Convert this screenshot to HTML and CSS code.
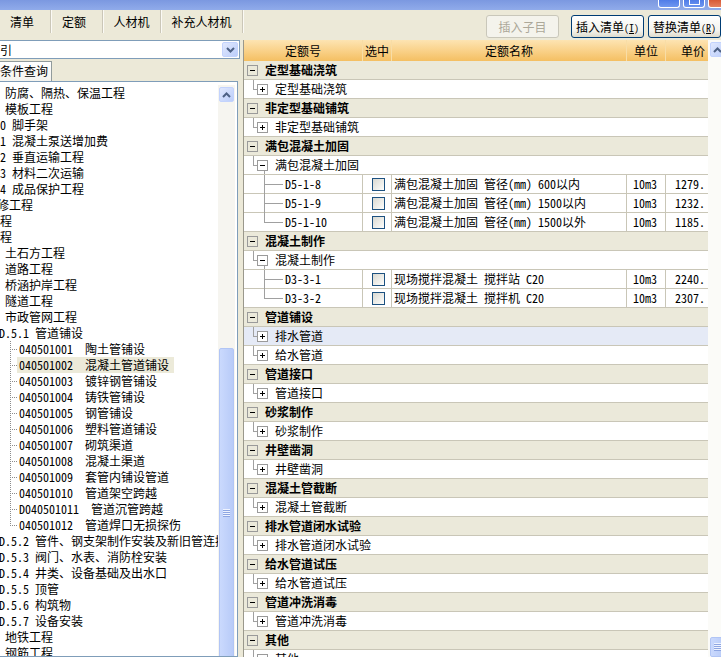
FILE: index.html
```html
<!DOCTYPE html>
<html lang="zh-CN">
<head>
<meta charset="utf-8">
<title>定额</title>
<link rel="stylesheet" href="styles.css">
</head>
<body>
<div class="titlebar">
  <div class="winbtns">
    <span class="wb"></span>
    <span class="wb"><i class="sq"></i></span>
    <span class="wb close"></span>
  </div>
</div>
<div class="toolbar">
  <nav class="tabs">
    <span class="tab t1">清单</span>
    <span class="tab t2">定额</span>
    <span class="tab t3">人材机</span>
    <span class="tab t4">补充人材机</span>
  </nav>
  <div class="actions">
    <button class="btn disabled">插入子目</button>
    <button class="btn b2">插入清单<small>(<u>I</u>)</small></button>
    <button class="btn b3">替换清单<small>(<u>R</u>)</small></button>
  </div>
</div>
<div class="main">
  <aside class="left">
    <div class="combo">
      <span class="combo-text">引</span>
      <span class="sbtn"><svg width="9" height="6" viewBox="0 0 9 6"><path d="M1 1L4.5 4.5L8 1" fill="none" stroke="#4d6185" stroke-width="2"/></svg></span>
    </div>
    <div class="qtabs"><span class="qtab">条件查询</span></div>
    <div class="listbox">
      <ul class="tree">
        <li class="i5">防腐、隔热、保温工程</li>
        <li class="i5">模板工程</li>
        <li>0 脚手架</li>
        <li>1 混凝土泵送增加费</li>
        <li>2 垂直运输工程</li>
        <li>3 材料二次运输</li>
        <li>4 成品保护工程</li>
        <li class="cut">修工程</li>
        <li>程</li>
        <li>程</li>
        <li class="i5">土石方工程</li>
        <li class="i5">道路工程</li>
        <li class="i5">桥涵护岸工程</li>
        <li class="i5">隧道工程</li>
        <li class="i5">市政管网工程</li>
        <li class="cut1">D.5.1 管道铺设</li>
        <li class="kids">
          <ul>
            <li>040501001  陶土管铺设</li>
            <li><span class="hl">040501002  混凝土管道铺设</span></li>
            <li>040501003  镀锌钢管铺设</li>
            <li>040501004  铸铁管铺设</li>
            <li>040501005  钢管铺设</li>
            <li>040501006  塑料管道铺设</li>
            <li>040501007  砌筑渠道</li>
            <li>040501008  混凝土渠道</li>
            <li>040501009  套管内铺设管道</li>
            <li>040501010  管道架空跨越</li>
            <li>D040501011  管道沉管跨越</li>
            <li class="last">040501012  管道焊口无损探伤</li>
          </ul>
        </li>
        <li class="cut1">D.5.2 管件、钢支架制作安装及新旧管连接</li>
        <li class="cut1">D.5.3 阀门、水表、消防栓安装</li>
        <li class="cut1">D.5.4 井类、设备基础及出水口</li>
        <li class="cut1">D.5.5 顶管</li>
        <li class="cut1">D.5.6 构筑物</li>
        <li class="cut1">D.5.7 设备安装</li>
        <li class="i5">地铁工程</li>
        <li class="i5">钢筋工程</li>
      </ul>
      <div class="vscroll lscroll">
        <span class="sbtn up"><svg width="9" height="6" viewBox="0 0 9 6"><path d="M1 5L4.5 1.5L8 5" fill="none" stroke="#4d6185" stroke-width="2"/></svg></span>
        <span class="thumb lthumb"><i class="grip"></i></span>
      </div>
    </div>
  </aside>
  <div class="splitter"></div>
  <section class="grid">
    <div class="gridbody">
      <div class="ghead">
        <span class="h c1">定额号</span>
        <span class="h c2">选中</span>
        <span class="h c3">定额名称</span>
        <span class="h c4">单位</span>
        <span class="h c5 r">单价</span>
      </div>

      <div class="row grp"><svg class="pm" width="11" height="11"><rect x="0.5" y="0.5" width="10" height="10" fill="none" stroke="#9a9a9a"/><path d="M3 5.5h5" stroke="#000"/></svg><b class="label">定型基础浇筑</b></div>
      <div class="row sub"><i class="conn"></i><svg class="pm" width="11" height="11"><rect x="0.5" y="0.5" width="10" height="10" fill="#fff" stroke="#9a9a9a"/><path d="M3 5.5h5M5.5 3v5" stroke="#000"/></svg><span class="label">定型基础浇筑</span></div>

      <div class="row grp"><svg class="pm" width="11" height="11"><rect x="0.5" y="0.5" width="10" height="10" fill="none" stroke="#9a9a9a"/><path d="M3 5.5h5" stroke="#000"/></svg><b class="label">非定型基础铺筑</b></div>
      <div class="row sub"><i class="conn"></i><svg class="pm" width="11" height="11"><rect x="0.5" y="0.5" width="10" height="10" fill="#fff" stroke="#9a9a9a"/><path d="M3 5.5h5M5.5 3v5" stroke="#000"/></svg><span class="label">非定型基础铺筑</span></div>

      <div class="row grp"><svg class="pm" width="11" height="11"><rect x="0.5" y="0.5" width="10" height="10" fill="none" stroke="#9a9a9a"/><path d="M3 5.5h5" stroke="#000"/></svg><b class="label">满包混凝土加固</b></div>
      <div class="row sub open"><i class="conn"></i><svg class="pm" width="11" height="11"><rect x="0.5" y="0.5" width="10" height="10" fill="#fff" stroke="#9a9a9a"/><path d="M3 5.5h5" stroke="#000"/></svg><span class="label">满包混凝土加固</span></div>
      <div class="row item"><div class="c c1"><i class="tl"></i><span>D5-1-8</span></div><div class="c c2"><i class="chk"></i></div><div class="c c3">满包混凝土加固 管径(mm) 600以内</div><div class="c c4">10m3</div><div class="c c5">1279.</div></div>
      <div class="row item"><div class="c c1"><i class="tl"></i><span>D5-1-9</span></div><div class="c c2"><i class="chk"></i></div><div class="c c3">满包混凝土加固 管径(mm) 1500以内</div><div class="c c4">10m3</div><div class="c c5">1232.</div></div>
      <div class="row item"><div class="c c1"><i class="tl last"></i><span>D5-1-10</span></div><div class="c c2"><i class="chk"></i></div><div class="c c3">满包混凝土加固 管径(mm) 1500以外</div><div class="c c4">10m3</div><div class="c c5">1185.</div></div>

      <div class="row grp"><svg class="pm" width="11" height="11"><rect x="0.5" y="0.5" width="10" height="10" fill="none" stroke="#9a9a9a"/><path d="M3 5.5h5" stroke="#000"/></svg><b class="label">混凝土制作</b></div>
      <div class="row sub open"><i class="conn"></i><svg class="pm" width="11" height="11"><rect x="0.5" y="0.5" width="10" height="10" fill="#fff" stroke="#9a9a9a"/><path d="M3 5.5h5" stroke="#000"/></svg><span class="label">混凝土制作</span></div>
      <div class="row item"><div class="c c1"><i class="tl"></i><span>D3-3-1</span></div><div class="c c2"><i class="chk"></i></div><div class="c c3">现场搅拌混凝土 搅拌站 C20</div><div class="c c4">10m3</div><div class="c c5">2240.</div></div>
      <div class="row item"><div class="c c1"><i class="tl last"></i><span>D3-3-2</span></div><div class="c c2"><i class="chk"></i></div><div class="c c3">现场搅拌混凝土 搅拌机 C20</div><div class="c c4">10m3</div><div class="c c5">2307.</div></div>

      <div class="row grp"><svg class="pm" width="11" height="11"><rect x="0.5" y="0.5" width="10" height="10" fill="none" stroke="#9a9a9a"/><path d="M3 5.5h5" stroke="#000"/></svg><b class="label">管道铺设</b></div>
      <div class="row sub sel"><i class="conn"></i><svg class="pm" width="11" height="11"><rect x="0.5" y="0.5" width="10" height="10" fill="#fff" stroke="#9a9a9a"/><path d="M3 5.5h5M5.5 3v5" stroke="#000"/></svg><span class="label">排水管道</span></div>
      <div class="row sub"><i class="conn"></i><svg class="pm" width="11" height="11"><rect x="0.5" y="0.5" width="10" height="10" fill="#fff" stroke="#9a9a9a"/><path d="M3 5.5h5M5.5 3v5" stroke="#000"/></svg><span class="label">给水管道</span></div>

      <div class="row grp"><svg class="pm" width="11" height="11"><rect x="0.5" y="0.5" width="10" height="10" fill="none" stroke="#9a9a9a"/><path d="M3 5.5h5" stroke="#000"/></svg><b class="label">管道接口</b></div>
      <div class="row sub"><i class="conn"></i><svg class="pm" width="11" height="11"><rect x="0.5" y="0.5" width="10" height="10" fill="#fff" stroke="#9a9a9a"/><path d="M3 5.5h5M5.5 3v5" stroke="#000"/></svg><span class="label">管道接口</span></div>

      <div class="row grp"><svg class="pm" width="11" height="11"><rect x="0.5" y="0.5" width="10" height="10" fill="none" stroke="#9a9a9a"/><path d="M3 5.5h5" stroke="#000"/></svg><b class="label">砂浆制作</b></div>
      <div class="row sub"><i class="conn"></i><svg class="pm" width="11" height="11"><rect x="0.5" y="0.5" width="10" height="10" fill="#fff" stroke="#9a9a9a"/><path d="M3 5.5h5M5.5 3v5" stroke="#000"/></svg><span class="label">砂浆制作</span></div>

      <div class="row grp"><svg class="pm" width="11" height="11"><rect x="0.5" y="0.5" width="10" height="10" fill="none" stroke="#9a9a9a"/><path d="M3 5.5h5" stroke="#000"/></svg><b class="label">井壁凿洞</b></div>
      <div class="row sub"><i class="conn"></i><svg class="pm" width="11" height="11"><rect x="0.5" y="0.5" width="10" height="10" fill="#fff" stroke="#9a9a9a"/><path d="M3 5.5h5M5.5 3v5" stroke="#000"/></svg><span class="label">井壁凿洞</span></div>

      <div class="row grp"><svg class="pm" width="11" height="11"><rect x="0.5" y="0.5" width="10" height="10" fill="none" stroke="#9a9a9a"/><path d="M3 5.5h5" stroke="#000"/></svg><b class="label">混凝土管截断</b></div>
      <div class="row sub"><i class="conn"></i><svg class="pm" width="11" height="11"><rect x="0.5" y="0.5" width="10" height="10" fill="#fff" stroke="#9a9a9a"/><path d="M3 5.5h5M5.5 3v5" stroke="#000"/></svg><span class="label">混凝土管截断</span></div>

      <div class="row grp"><svg class="pm" width="11" height="11"><rect x="0.5" y="0.5" width="10" height="10" fill="none" stroke="#9a9a9a"/><path d="M3 5.5h5" stroke="#000"/></svg><b class="label">排水管道闭水试验</b></div>
      <div class="row sub"><i class="conn"></i><svg class="pm" width="11" height="11"><rect x="0.5" y="0.5" width="10" height="10" fill="#fff" stroke="#9a9a9a"/><path d="M3 5.5h5M5.5 3v5" stroke="#000"/></svg><span class="label">排水管道闭水试验</span></div>

      <div class="row grp"><svg class="pm" width="11" height="11"><rect x="0.5" y="0.5" width="10" height="10" fill="none" stroke="#9a9a9a"/><path d="M3 5.5h5" stroke="#000"/></svg><b class="label">给水管道试压</b></div>
      <div class="row sub"><i class="conn"></i><svg class="pm" width="11" height="11"><rect x="0.5" y="0.5" width="10" height="10" fill="#fff" stroke="#9a9a9a"/><path d="M3 5.5h5M5.5 3v5" stroke="#000"/></svg><span class="label">给水管道试压</span></div>

      <div class="row grp"><svg class="pm" width="11" height="11"><rect x="0.5" y="0.5" width="10" height="10" fill="none" stroke="#9a9a9a"/><path d="M3 5.5h5" stroke="#000"/></svg><b class="label">管道冲洗消毒</b></div>
      <div class="row sub"><i class="conn"></i><svg class="pm" width="11" height="11"><rect x="0.5" y="0.5" width="10" height="10" fill="#fff" stroke="#9a9a9a"/><path d="M3 5.5h5M5.5 3v5" stroke="#000"/></svg><span class="label">管道冲洗消毒</span></div>

      <div class="row grp"><svg class="pm" width="11" height="11"><rect x="0.5" y="0.5" width="10" height="10" fill="none" stroke="#9a9a9a"/><path d="M3 5.5h5" stroke="#000"/></svg><b class="label">其他</b></div>
      <div class="row sub"><i class="conn"></i><svg class="pm" width="11" height="11"><rect x="0.5" y="0.5" width="10" height="10" fill="#fff" stroke="#9a9a9a"/><path d="M3 5.5h5M5.5 3v5" stroke="#000"/></svg><span class="label">其他</span></div>
    </div>
    <div class="vscroll rscroll">
      <span class="sbtn up"><svg width="9" height="6" viewBox="0 0 9 6"><path d="M1 5L4.5 1.5L8 5" fill="none" stroke="#4d6185" stroke-width="2"/></svg></span>
      <span class="thumb rthumb"><i class="grip"></i></span>
    </div>
  </section>
</div>
</body>
</html>
```

FILE: styles.css
```css
html, body {
  margin: 0;
  padding: 0;
}
body {
  width: 721px;
  height: 657px;
  overflow: hidden;
  background: #ece9d8;
  color: #000;
  font-family: "Noto Sans Mono CJK SC", "Noto Sans CJK SC", "Noto Sans CJK JP", sans-serif;
  font-size: 12px;
}

/* title bar */
.titlebar {
  height: 10px;
  background: linear-gradient(#7b98e0, #90abea);
  display: flex;
  justify-content: flex-end;
  overflow: hidden;
}
.winbtns {
  display: flex;
  gap: 3px;
  margin-right: -9px;
}
.wb {
  width: 22px;
  height: 8px;
  box-sizing: border-box;
  border: 1px solid #fff;
  border-top: 0;
  border-radius: 0 0 3px 3px;
  background: linear-gradient(#4f7ce8, #6f97f0);
  display: flex;
  justify-content: center;
}
.wb .sq {
  width: 9px;
  height: 4px;
  border: 1px solid #fff;
  border-top: 0;
}
.wb.close {
  background: linear-gradient(#d85a36, #e58060);
}

/* toolbar */
.toolbar {
  height: 28px;
  display: flex;
  justify-content: space-between;
}
.tabs {
  display: flex;
  height: 23px;
}
.tab {
  height: 23px;
  line-height: 23px;
  text-align: center;
  box-sizing: border-box;
  border-right: 1px solid #cbc7b8;
  box-shadow: 1px 0 0 #fbfaf5;
}
.t1 { width: 51px; padding-right: 6px; }
.t2 { width: 52px; padding-right: 5px; }
.t3 { width: 58px; }
.t4 { width: 82px; }

.actions {
  display: flex;
  align-items: flex-start;
  padding-top: 5px;
}
.btn {
  width: 73px;
  height: 23px;
  box-sizing: border-box;
  padding: 0;
  border: 1px solid #003c74;
  border-radius: 3px;
  background: linear-gradient(#ffffff, #f3f2ec 70%, #dedbcd);
  font: inherit;
  font-size: 12px;
  color: #000;
  white-space: nowrap;
}
.btn small {
  font-size: 10px;
}
.btn.disabled {
  border-color: #c9c7ba;
  color: #aca899;
  background: #f4f3ec;
}
.b2 { margin-left: 12px; }
.b3 { margin-left: 4px; }

/* main */
.main {
  display: flex;
  height: 619px;
}
.left {
  width: 241px;
  flex: none;
  display: flex;
  flex-direction: column;
}
.combo {
  margin: 2px 0 0 -2px;
  width: 242px;
  height: 19px;
  box-sizing: border-box;
  border: 1px solid #7f9db9;
  background: #fff;
  display: flex;
  align-items: center;
  justify-content: space-between;
  flex: none;
}
.combo-text {
  padding-left: 1px;
  line-height: 17px;
}
.combo .sbtn {
  margin-right: 1px;
}
.sbtn {
  width: 15px;
  height: 15px;
  box-sizing: border-box;
  border: 1px solid #c3d3fd;
  border-radius: 2px;
  background: linear-gradient(135deg, #e0e8fe, #bccefa);
  display: flex;
  align-items: center;
  justify-content: center;
  flex: none;
}
.combo .sbtn {
  width: 16px;
}

.qtabs {
  margin-top: 2px;
  height: 20px;
  display: flex;
  flex: none;
}
.qtab {
  margin-left: -1px;
  height: 20px;
  box-sizing: border-box;
  border: 1px solid #919b9c;
  border-bottom: 0;
  padding: 0 3px 0 0;
  line-height: 18px;
  background: linear-gradient(#ffffff, #f4f3ee);
}

.listbox {
  flex: 1;
  margin-left: -1px;
  width: 239px;
  box-sizing: border-box;
  border: 1px solid #7f9db9;
  padding: 3px 2px 0 0;
  background: #fff;
  display: flex;
  overflow: hidden;
}
.tree {
  flex: 1;
  margin: 0;
  padding: 0;
  list-style: none;
  overflow: hidden;
}
.tree li {
  height: 16px;
  line-height: 16px;
  white-space: pre;
}
.tree .i5 { padding-left: 5px; }
.tree .cut { margin-left: -3px; }
.tree .cut1 { margin-left: -1px; }
.tree li.kids {
  height: auto;
  white-space: normal;
}
.kids ul {
  margin: 0 0 0 10px;
  padding: 0;
  list-style: none;
}
.kids ul li {
  padding-left: 9px;
  background:
    repeating-linear-gradient(to bottom, #8c8c8c 0 1px, transparent 1px 2px) 0 0 / 1px 100% no-repeat,
    repeating-linear-gradient(to right, #8c8c8c 0 1px, transparent 1px 2px) 0 8px / 8px 1px no-repeat;
}
.kids ul li.last {
  background:
    repeating-linear-gradient(to bottom, #8c8c8c 0 1px, transparent 1px 2px) 0 0 / 1px 9px no-repeat,
    repeating-linear-gradient(to right, #8c8c8c 0 1px, transparent 1px 2px) 0 8px / 8px 1px no-repeat;
}
.hl {
  display: inline-block;
  margin-left: -2px;
  padding: 0 5px 0 2px;
  background: #ecead9;
}

/* scrollbars */
.vscroll {
  width: 17px;
  flex: none;
  background: #f6f5f0;
  display: flex;
  flex-direction: column;
  align-items: center;
}
.lscroll .up {
  margin-top: 2px;
}
.thumb {
  width: 15px;
  box-sizing: border-box;
  border: 1px solid #b1c5f5;
  border-radius: 2px;
  background: linear-gradient(90deg, #cad9fd, #b8cbf8);
  display: flex;
  align-items: center;
  justify-content: center;
  flex: none;
}
.lthumb {
  margin-top: 246px;
  height: 330px;
}
.grip {
  width: 7px;
  height: 8px;
  background: repeating-linear-gradient(to bottom, #eef3ff 0 1px, #8ea6e2 1px 2px);
}

.splitter {
  width: 2px;
  flex: none;
}

/* grid */
.grid {
  margin-top: 2px;
  flex: none;
  width: 482px;
  display: flex;
  border-left: 1px solid #9a988c;
  background: #fff;
}
.gridbody {
  width: 464px;
  flex: none;
  background: #fff;
}
.ghead {
  display: flex;
  height: 21px;
  background: linear-gradient(#fde4b2, #f9d086 55%, #f4bf62);
}
.ghead .h {
  line-height: 21px;
  text-align: center;
  box-sizing: border-box;
}
.ghead .h + .h {
  border-left: 1px solid #f8dda6;
}
.ghead .r {
  text-align: right;
  padding-right: 3px;
}
.c1 { width: 118px; }
.c2 { width: 29px; }
.c3 { width: 235px; }
.c4 { width: 39px; }
.c5 { width: 43px; }

.row {
  display: flex;
  align-items: flex-start;
  height: 18px;
  border-bottom: 1px solid #c9c6b7;
  line-height: 18px;
  white-space: pre;
}
.row.grp {
  background: #ebe9da;
}
.row.sel {
  background: #e5eaf6;
}
.row.sub.open {
  background: linear-gradient(#a0a0a0, #a0a0a0) 20px 15px / 1px 4px no-repeat, #fff;
}
.pm {
  flex: none;
  margin-top: 4px;
  display: block;
}
.row.grp .pm {
  margin-left: 3px;
}
.row.grp .label {
  margin-left: 7px;
  font-family: "Noto Sans CJK SC", "Noto Sans CJK JP", sans-serif;
  font-weight: bold;
}
.conn {
  flex: none;
  width: 4px;
  height: 10px;
  margin-left: 9px;
  box-sizing: border-box;
  border-left: 1px solid #a0a0a0;
  border-bottom: 1px solid #a0a0a0;
}
.row.sub .label {
  margin-left: 7px;
}

.row.item .c {
  height: 18px;
  box-sizing: border-box;
  overflow: hidden;
}
.row.item .c + .c {
  border-left: 1px solid #c9c6b7;
}
.row.item .c1 {
  display: flex;
  overflow: visible;
}
.tl {
  flex: none;
  width: 19px;
  height: 19px;
  margin-left: 20px;
  margin-right: 2px;
  background:
    linear-gradient(#a0a0a0, #a0a0a0) 0 0 / 1px 19px no-repeat,
    linear-gradient(#a0a0a0, #a0a0a0) 0 9px / 19px 1px no-repeat;
}
.tl.last {
  background:
    linear-gradient(#a0a0a0, #a0a0a0) 0 0 / 1px 10px no-repeat,
    linear-gradient(#a0a0a0, #a0a0a0) 0 9px / 19px 1px no-repeat;
}
.row.item .c2 {
  display: flex;
  justify-content: center;
  align-items: center;
  padding-left: 2px;
}
.chk {
  width: 13px;
  height: 13px;
  box-sizing: border-box;
  border: 1px solid #1c5180;
  background: linear-gradient(135deg, #d9d9d2, #f6f6f3 80%, #ffffff);
}
.row.item .c3 { padding-left: 2px; }
.row.item .c4 { padding-left: 6px; }
.row.item .c5 { text-align: right; padding-right: 3px; }

.rscroll {
  background: #fbfbf8;
}
.rscroll .up {
  margin-top: 2px;
  margin-left: 2px;
}
.rthumb {
  margin-top: auto;
  margin-left: 2px;
  height: 20px;
}
```
